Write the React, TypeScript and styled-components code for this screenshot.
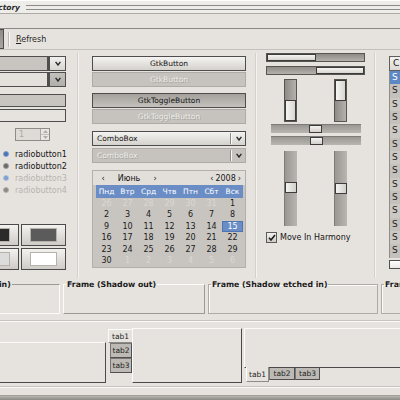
import styled, { createGlobalStyle } from "styled-components";

const FONT = `"DejaVu Sans", "Liberation Sans", sans-serif`;

const GlobalStyle = createGlobalStyle`
  * { box-sizing: border-box; }
  html, body { margin: 0; padding: 0; overflow: hidden; background: #e6e3df; }
  body { font-family: ${FONT}; color: #141414; }
`;

// window chrome
const Window = styled.div`
  width: 520px;
  height: 400px;
  margin-left: -100px;
  display: flex;
  flex-direction: column;
  background: #e6e3df;
`;

const TitleBar = styled.div`
  flex: none;
  height: 14px;
  display: flex;
  align-items: center;
  background: #efedea;
  border-top: 1px solid #ffffff;
  border-bottom: 1px solid #aeaba6;
`;

const TitleText = styled.div`
  width: 120px;
  text-align: right;
  font-size: 7.5px;
  font-weight: bold;
  font-style: italic;
  color: #2a2a2a;
  white-space: nowrap;
`;

const TitleRule = styled.div`
  flex: 1;
  height: 5px;
  margin-left: 6px;
  border-top: 1px solid #8d8b87;
  border-bottom: 1px solid #8d8b87;
`;

const MenuBar = styled.div`
  flex: none;
  height: 15px;
  border-bottom: 1px solid #8a8884;
`;

const ToolBar = styled.div`
  flex: none;
  height: 21px;
  display: flex;
  align-items: center;
  padding-left: 74px;
  border-bottom: 1px solid #c4c1bc;
`;

const ToolButton = styled.div`
  width: 30px;
  height: 20px;
  margin-top: -1px;
  border: 1px solid #4c4c4c;
  background: linear-gradient(#8f8c88, #a9a6a1);
`;

const ToolSeparator = styled.div`
  width: 2px;
  height: 15px;
  margin: 0 5px 0 4px;
  border-left: 1px solid #bdbab5;
  border-right: 1px solid #fbfbfa;
`;

const ToolLabel = styled.span`
  margin-left: 1px;
  font-size: 8px;
  color: #1e1e1e;
`;

// main grid of widgets
const Main = styled.div`
  flex: none;
  height: 230px;
  display: flex;
  padding-left: 10px;
`;

const Column = styled.div<{ $w: number; $pt: number }>`
  flex: none;
  width: ${(p) => p.$w}px;
  padding-top: ${(p) => p.$pt}px;
  display: flex;
  flex-direction: column;
`;

const ColumnRule = styled.div<{ $ml: number; $mr: number }>`
  flex: none;
  width: 2px;
  margin: 3px ${(p) => p.$mr}px 2px ${(p) => p.$ml}px;
  border-left: 1px solid #d3d0cb;
  border-right: 1px solid #f3f2f0;
`;

// column 1
const ComboEntry = styled.div<{ $mt?: number }>`
  display: flex;
  height: 15px;
  margin-top: ${(p) => p.$mt ?? 0}px;
`;

const EntryField = styled.div<{ $shade: "grey" | "light" }>`
  flex: 1;
  border: 1px solid #4f4f4f;
  background: ${(p) => (p.$shade === "grey" ? "#c8c5c0" : "#e4e1dc")};
`;

const ArrowButton = styled.div<{ $shade: "grey" | "light" }>`
  width: 18px;
  display: flex;
  align-items: center;
  justify-content: center;
  border: 1px solid #4f4f4f;
  border-left-width: 2px;
  background: ${(p) =>
    p.$shade === "grey"
      ? "linear-gradient(#c4c1bc, #b2afaa)"
      : "linear-gradient(#f1f0ed, #d9d6d1)"};
`;

const Entry = styled.div<{ $shade: "grey" | "light"; $mt: number }>`
  height: 13px;
  margin-top: ${(p) => p.$mt}px;
  border: 1px solid #4f4f4f;
  background: ${(p) => (p.$shade === "grey" ? "#c8c5c0" : "#e6e3df")};
`;

const Spin = styled.div`
  width: 35px;
  height: 13px;
  margin: 6px 0 0 105px;
  display: flex;
  border: 1px solid #8e8c88;
  background: #dedbd6;
`;

const SpinText = styled.span`
  flex: 1;
  padding-left: 3px;
  font-size: 8px;
  line-height: 11px;
  color: #aaa7a2;
`;

const SpinArrows = styled.div`
  width: 9px;
  display: flex;
  flex-direction: column;
  border-left: 1px solid #aaa7a2;
`;

const SpinHalf = styled.div`
  flex: 1;
  display: flex;
  align-items: center;
  justify-content: center;
  background: #e9e7e3;
  & + & { border-top: 1px solid #c2bfba; }
`;

const RadioList = styled.div`
  margin: 7px 0 0 92px;
  display: flex;
  flex-direction: column;
`;

const RadioRow = styled.div<{ $disabled?: boolean }>`
  height: 12.1px;
  display: flex;
  align-items: center;
  gap: 6px;
  font-size: 8px;
  color: ${(p) => (p.$disabled ? "#b6b3ae" : "#151515")};
`;

const RadioDot = styled.span<{ $on: boolean; $disabled?: boolean }>`
  width: 6px;
  height: 6px;
  margin-left: 1px;
  border-radius: 50%;
  flex: none;
  background: ${(p) =>
    p.$on
      ? p.$disabled
        ? "radial-gradient(circle, #7f9fd0 35%, #d5dce8 85%)"
        : "radial-gradient(circle, #4b74b6 35%, #b9c6dc 85%)"
      : p.$disabled
      ? "radial-gradient(circle, #8d8b87 35%, #d3d0cb 85%)"
      : "radial-gradient(circle, #6e6c68 35%, #c7c4bf 85%)"};
`;

const ColorGrid = styled.div`
  margin-top: 28px;
  display: grid;
  grid-template-columns: 45px 45px;
  grid-auto-rows: 22px;
  gap: 2px;
  justify-content: end;
`;

const ColorButton = styled.div`
  display: flex;
  padding: 3px 8px 3px 8px;
  border: 1px solid #4b4b4b;
  background: linear-gradient(#f3f2ef, #cfccc7);
`;

const Swatch = styled.div<{ $color: string }>`
  flex: 1;
  border: 1px solid #b5b2ad;
  background: ${(p) => p.$color};
`;

// column 2
type BtnState = "normal" | "insensitive" | "active";

const Button = styled.div<{ $state: BtnState; $mt: number }>`
  height: 15px;
  margin-top: ${(p) => p.$mt}px;
  display: flex;
  align-items: center;
  justify-content: center;
  font-size: 7.5px;
  border: 1px solid
    ${(p) => (p.$state === "insensitive" ? "#aeaba6" : "#4d4d4d")};
  background: ${(p) =>
    p.$state === "normal"
      ? "linear-gradient(#f4f3f1, #d5d2cd)"
      : p.$state === "active"
      ? "linear-gradient(#a4a19c, #c5c2bd)"
      : "#c6c3be"};
  color: ${(p) => (p.$state === "insensitive" ? "#ecebe8" : "#141414")};
  text-shadow: ${(p) =>
    p.$state === "insensitive" ? "1px 1px 0 #a9a6a1" : "none"};
`;

const ComboBox = styled(Button)`
  justify-content: flex-start;
  padding-left: 4px;
`;

const ComboText = styled.span`
  flex: 1;
`;

const ComboDivider = styled.span`
  width: 2px;
  height: 11px;
  border-left: 1px solid #8d8b87;
  border-right: 1px solid #fafaf9;
`;

const ComboArrow = styled.span`
  width: 13px;
  display: flex;
  justify-content: center;
`;

const Calendar = styled.div`
  height: 98px;
  margin-top: 7px;
  display: flex;
  flex-direction: column;
  border: 1px solid #b3b0ab;
  background: #c8c5c0;
`;

const CalHeader = styled.div`
  height: 14px;
  display: flex;
  align-items: center;
  padding: 0 4px 0 6px;
  background: #e2dfdb;
  font-size: 8px;
  color: #141414;
`;

const CalArrow = styled.span`
  width: 8px;
  text-align: center;
`;

const CalMonth = styled.span`
  width: 44px;
  text-align: center;
`;

const CalYear = styled.span`
  margin-left: auto;
  display: flex;
  align-items: center;
  gap: 2px;
`;

const DayNames = styled.div`
  height: 13px;
  margin: 0 2px 0 3px;
  display: grid;
  grid-template-columns: repeat(7, 21px);
  align-items: center;
  background: #6a8dc6;
  color: #ffffff;
  font-size: 7.5px;
  text-align: center;
`;

const DayGrid = styled.div`
  margin: 0 2px 0 3px;
  display: grid;
  grid-template-columns: repeat(7, 21px);
  grid-auto-rows: 11.4px;
  font-size: 8px;
  text-align: center;
`;

const Day = styled.span<{ $other?: boolean; $selected?: boolean }>`
  line-height: ${(p) => (p.$selected ? "9.4px" : "11.4px")};
  color: ${(p) => (p.$selected ? "#ffffff" : p.$other ? "#dad7d2" : "#1a1a1a")};
  background: ${(p) => (p.$selected ? "#6a8dc6" : "transparent")};
  border: ${(p) => (p.$selected ? "1px solid #4f74b3" : "none")};
`;

// column 3
const Trough = styled.div<{ $mt: number; $reverse?: boolean }>`
  height: 9px;
  margin-top: ${(p) => p.$mt}px;
  display: flex;
  flex-direction: ${(p) => (p.$reverse ? "row-reverse" : "row")};
  border: 1px solid #57554f;
  background: linear-gradient(#8e8b86, #b5b2ad);
`;

const BarFill = styled.div`
  height: 100%;
  border: 1px solid #3b3b3b;
  background: linear-gradient(#f6f5f3, #d8d5d0);
`;

const VPair = styled.div<{ $mt: number; $h: number }>`
  height: ${(p) => p.$h}px;
  margin-top: ${(p) => p.$mt}px;
  padding-left: 18px;
  display: flex;
  gap: 37px;
`;

const VTrough = styled.div<{ $fromTop?: boolean }>`
  width: 13px;
  height: 100%;
  display: flex;
  flex-direction: ${(p) => (p.$fromTop ? "column" : "column-reverse")};
  border: 1px solid #57554f;
  background: linear-gradient(90deg, #8e8b86, #b5b2ad);
`;

const VFill = styled.div`
  width: 100%;
  border: 1px solid #3b3b3b;
  background: linear-gradient(90deg, #f6f5f3, #d8d5d0);
`;

const HScale = styled.div<{ $mt: number }>`
  width: 90px;
  height: 9px;
  margin: ${(p) => p.$mt}px 0 0 5px;
  display: flex;
  border-top: 1px solid #7d7b77;
  background: linear-gradient(#9a9792, #b9b6b1);
`;

const HThumb = styled.div`
  width: 13px;
  height: 100%;
  border: 1px solid #3c3c3c;
  background: linear-gradient(#f4f3f1, #d3d0cb);
`;

const VScale = styled.div`
  width: 13px;
  height: 100%;
  display: flex;
  flex-direction: column;
  border-left: 1px solid #7d7b77;
  background: linear-gradient(90deg, #9a9792, #b9b6b1);
`;

const VThumb = styled.div`
  width: 100%;
  height: 11px;
  border: 1px solid #3c3c3c;
  background: linear-gradient(90deg, #f4f3f1, #d3d0cb);
`;

const CheckRow = styled.div`
  height: 11px;
  margin-top: 6px;
  display: flex;
  align-items: center;
  gap: 3px;
  font-size: 8px;
  color: #151515;
`;

const CheckBox = styled.span`
  width: 11px;
  height: 11px;
  display: flex;
  align-items: center;
  justify-content: center;
  border: 1px solid #5b5b5b;
  background: linear-gradient(#f2f1ee, #cfccc7);
`;

// column 4
const Tree = styled.div`
  height: 213px;
  display: flex;
  flex-direction: column;
`;

const TreeHeader = styled.div`
  height: 15px;
  padding-left: 3px;
  border: 1px solid #5f5f5f;
  border-right: 0;
  background: linear-gradient(#f3f2f0, #dcd9d4);
  font-size: 9px;
  line-height: 13px;
  white-space: nowrap;
  overflow: hidden;
`;

const TreeRow = styled.div<{ $selected?: boolean; $alt?: boolean }>`
  height: 13.33px;
  padding-left: 2px;
  border-left: 1px solid #8e8c88;
  font-size: 9px;
  line-height: 13.33px;
  white-space: nowrap;
  overflow: hidden;
  color: ${(p) => (p.$selected ? "#ffffff" : "#222222")};
  background: ${(p) =>
    p.$selected ? "#5d88c6" : p.$alt ? "#c4c1bc" : "#ccc9c4"};
`;

const TreeScroll = styled.div`
  height: 9px;
  margin-top: auto;
  border: 1px solid #4f4f4f;
  border-right: 0;
  background: linear-gradient(#ffffff, #e9e8e5);
`;

// frames
const FramesRow = styled.div`
  flex: none;
  height: 34px;
  display: flex;
  gap: 3px;
  padding-left: 24px;
`;

const frameBorders = {
  in: "#9c9994 #fcfcfb #fcfcfb #9c9994",
  out: "#fcfcfb #9c9994 #9c9994 #fcfcfb",
  etched: "#aeaba6",
};

const Frame = styled.fieldset<{ $w: number; $shadow: "in" | "out" | "etched" }>`
  flex: none;
  width: ${(p) => p.$w}px;
  height: 34px;
  margin: 0;
  padding: 0 2px;
  min-width: 0;
  border: 1px solid;
  border-color: ${(p) => frameBorders[p.$shadow]};
  box-shadow: ${(p) => (p.$shadow === "etched" ? "inset 1px 1px 0 #fbfbfa" : "none")};
`;

const FrameLabel = styled.legend`
  padding: 0 1px;
  font-size: 7.8px;
  font-weight: bold;
  line-height: 9px;
  color: #1a1a1a;
  white-space: nowrap;
`;

const HRule = styled.div<{ $mt: number }>`
  flex: none;
  height: 2px;
  margin-top: ${(p) => p.$mt}px;
  border-top: 1px solid #c6c3be;
  border-bottom: 1px solid #fafaf9;
`;

// notebooks
const NotebookRow = styled.div`
  flex: none;
  height: 55px;
  margin-top: 6px;
  padding-left: 10px;
  display: flex;
`;

const TopNotebook = styled.div`
  width: 196px;
  display: flex;
  flex-direction: column;
`;

const TopTabs = styled.div`
  height: 14px;
  display: flex;
  align-items: flex-end;
  padding-left: 2px;
`;

const LeftNotebook = styled.div`
  width: 134px;
  margin-left: 2px;
  display: flex;
`;

const LeftTabs = styled.div`
  width: 24px;
  display: flex;
  flex-direction: column;
  padding-top: 1px;
`;

const BottomNotebook = styled.div`
  flex: 1;
  margin-left: 2px;
  display: flex;
  flex-direction: column;
`;

const BottomTabs = styled.div`
  height: 15px;
  display: flex;
  align-items: flex-start;
  padding-left: 2px;
`;

const Page = styled.div<{ $h?: number }>`
  flex: ${(p) => (p.$h ? "none" : "1")};
  height: ${(p) => (p.$h ? `${p.$h}px` : "auto")};
  border: 1px solid;
  border-color: #fbfbfa #4a4a4a #4a4a4a #fbfbfa;
`;

const Tab = styled.div<{ $active?: boolean; $w: number; $h: number }>`
  flex: none;
  width: ${(p) => p.$w}px;
  height: ${(p) => p.$h}px;
  display: flex;
  align-items: center;
  justify-content: center;
  font-size: 7.5px;
  color: #1e1e1e;
  border: 1px solid;
  border-color: ${(p) =>
    p.$active ? "#fbfbfa #8e8c88 #8e8c88 #fbfbfa" : "#7a7874 #4f4f4f #4f4f4f #7a7874"};
  background: ${(p) => (p.$active ? "#e6e3df" : "#bdbab5")};
`;

const SideTab = styled(Tab)`
  margin-left: ${(p) => (p.$active ? 0 : 2)}px;
  border-right: ${(p) => (p.$active ? "0" : "1px solid #4f4f4f")};
`;

const BottomTab = styled(Tab)`
  margin-top: ${(p) => (p.$active ? -1 : 0)}px;
  border-top: 0;
`;

const Footer = styled.div`
  flex: none;
  height: 5px;
  margin-top: auto;
  border-top: 1px solid #a3a09b;
  background: linear-gradient(#b8b5b0, #8b8985);
`;

const Chevron = () => (
  <svg width="6" height="5" viewBox="0 0 6 5">
    <polyline points="0.6,0.8 3,4 5.4,0.8" fill="none" stroke="#2a2a2a" strokeWidth="1.4" />
  </svg>
);

const SpinTriangle = ({ up }: { up?: boolean }) => (
  <svg width="5" height="3" viewBox="0 0 5 3">
    <polygon points={up ? "0,3 2.5,0 5,3" : "0,0 2.5,3 5,0"} fill="#b1aea9" />
  </svg>
);

const CheckMark = () => (
  <svg width="8" height="7" viewBox="0 0 8 7">
    <polyline points="1,3.8 3,6 7,1" fill="none" stroke="#1e1e1e" strokeWidth="1.6" />
  </svg>
);

const dayNames = ["Пнд", "Втр", "Срд", "Чтв", "Птн", "Сбт", "Вск"];

const days: { n: number; other?: boolean }[] = [
  ...[26, 27, 28, 29, 30, 31].map((n) => ({ n, other: true })),
  ...Array.from({ length: 30 }, (_, i) => ({ n: i + 1 })),
  ...[1, 2, 3, 4, 5, 6].map((n) => ({ n, other: true })),
];

const radios = [
  { label: "radiobutton1", on: true },
  { label: "radiobutton2", on: false },
  { label: "radiobutton3", on: true, disabled: true },
  { label: "radiobutton4", on: false, disabled: true },
];

export default function App() {
  return (
    <>
      <GlobalStyle />
      <Window>
        <TitleBar>
          <TitleText>The Widget Factory</TitleText>
          <TitleRule />
        </TitleBar>
        <MenuBar />
        <ToolBar>
          <ToolButton />
          <ToolSeparator />
          <ToolLabel>
            <u>R</u>efresh
          </ToolLabel>
        </ToolBar>

        <Main>
          <Column $w={156} $pt={6}>
            <ComboEntry>
              <EntryField $shade="grey" />
              <ArrowButton $shade="light">
                <Chevron />
              </ArrowButton>
            </ComboEntry>
            <ComboEntry $mt={1}>
              <EntryField $shade="light" />
              <ArrowButton $shade="grey">
                <Chevron />
              </ArrowButton>
            </ComboEntry>
            <Entry $shade="grey" $mt={7} />
            <Entry $shade="light" $mt={2} />
            <Spin>
              <SpinText>1</SpinText>
              <SpinArrows>
                <SpinHalf>
                  <SpinTriangle up />
                </SpinHalf>
                <SpinHalf>
                  <SpinTriangle />
                </SpinHalf>
              </SpinArrows>
            </Spin>
            <RadioList>
              {radios.map((r) => (
                <RadioRow key={r.label} $disabled={r.disabled}>
                  <RadioDot $on={r.on} $disabled={r.disabled} />
                  {r.label}
                </RadioRow>
              ))}
            </RadioList>
            <ColorGrid>
              <ColorButton>
                <Swatch $color="#2b2b2b" />
              </ColorButton>
              <ColorButton>
                <Swatch $color="#5b5b5b" />
              </ColorButton>
              <ColorButton>
                <Swatch $color="#dcdcdc" />
              </ColorButton>
              <ColorButton>
                <Swatch $color="#ffffff" />
              </ColorButton>
            </ColorGrid>
          </Column>

          <ColumnRule $ml={11} $mr={13} />

          <Column $w={154} $pt={6}>
            <Button $state="normal" $mt={0}>GtkButton</Button>
            <Button $state="insensitive" $mt={1}>GtkButton</Button>
            <Button $state="active" $mt={6}>GtkToggleButton</Button>
            <Button $state="insensitive" $mt={1}>GtkToggleButton</Button>
            <ComboBox $state="normal" $mt={7}>
              <ComboText>ComboBox</ComboText>
              <ComboDivider />
              <ComboArrow>
                <Chevron />
              </ComboArrow>
            </ComboBox>
            <ComboBox $state="insensitive" $mt={2}>
              <ComboText>ComboBox</ComboText>
              <ComboDivider />
              <ComboArrow>
                <Chevron />
              </ComboArrow>
            </ComboBox>
            <Calendar>
              <CalHeader>
                <CalArrow>‹</CalArrow>
                <CalMonth>Июнь</CalMonth>
                <CalArrow>›</CalArrow>
                <CalYear>
                  <span>‹</span>
                  <span>2008</span>
                  <span>›</span>
                </CalYear>
              </CalHeader>
              <DayNames>
                {dayNames.map((d) => (
                  <span key={d}>{d}</span>
                ))}
              </DayNames>
              <DayGrid>
                {days.map((d, i) => (
                  <Day key={i} $other={d.other} $selected={!d.other && d.n === 15}>
                    {d.n}
                  </Day>
                ))}
              </DayGrid>
            </Calendar>
          </Column>

          <ColumnRule $ml={9} $mr={9} />

          <Column $w={99} $pt={3}>
            <Trough $mt={0}>
              <BarFill style={{ width: "51%" }} />
            </Trough>
            <Trough $mt={4} $reverse>
              <BarFill style={{ width: "50%" }} />
            </Trough>
            <VPair $mt={4} $h={43}>
              <VTrough>
                <VFill style={{ height: "52%" }} />
              </VTrough>
              <VTrough $fromTop>
                <VFill style={{ height: "50%" }} />
              </VTrough>
            </VPair>
            <HScale $mt={2}>
              <HThumb style={{ marginLeft: 38 }} />
            </HScale>
            <HScale $mt={3}>
              <HThumb style={{ marginLeft: 39 }} />
            </HScale>
            <VPair $mt={6} $h={75}>
              <VScale>
                <VThumb style={{ marginTop: 31 }} />
              </VScale>
              <VScale>
                <VThumb style={{ marginTop: 32 }} />
              </VScale>
            </VPair>
            <CheckRow>
              <CheckBox>
                <CheckMark />
              </CheckBox>
              Move In Harmony
            </CheckRow>
          </Column>

          <ColumnRule $ml={9} $mr={13} />

          <Column $w={110} $pt={6}>
            <Tree>
              <TreeHeader>C</TreeHeader>
              {Array.from({ length: 14 }, (_, i) => (
                <TreeRow key={i} $selected={i === 0} $alt={i % 2 === 1}>
                  S
                </TreeRow>
              ))}
              <TreeScroll />
            </Tree>
          </Column>
        </Main>

        <FramesRow>
          <Frame $w={136} $shadow="in">
            <FrameLabel>Frame (Shadow in)</FrameLabel>
          </Frame>
          <Frame $w={142} $shadow="out">
            <FrameLabel>Frame (Shadow out)</FrameLabel>
          </Frame>
          <Frame $w={170} $shadow="etched">
            <FrameLabel>Frame (Shadow etched in)</FrameLabel>
          </Frame>
          <Frame $w={120} $shadow="etched">
            <FrameLabel>Frame (Shadow etched out)</FrameLabel>
          </Frame>
        </FramesRow>

        <HRule $mt={6} />

        <NotebookRow>
          <TopNotebook>
            <TopTabs>
              <Tab $active $w={23} $h={14}>tab1</Tab>
              <Tab $w={26} $h={12}>tab2</Tab>
              <Tab $w={26} $h={12}>tab3</Tab>
            </TopTabs>
            <Page />
          </TopNotebook>
          <LeftNotebook>
            <LeftTabs>
              <SideTab $active $w={24} $h={14}>tab1</SideTab>
              <SideTab $w={22} $h={15}>tab2</SideTab>
              <SideTab $w={22} $h={15}>tab3</SideTab>
            </LeftTabs>
            <Page />
          </LeftNotebook>
          <BottomNotebook>
            <Page $h={40} />
            <BottomTabs>
              <BottomTab $active $w={23} $h={15}>tab1</BottomTab>
              <BottomTab $w={26} $h={12}>tab2</BottomTab>
              <BottomTab $w={25} $h={12}>tab3</BottomTab>
            </BottomTabs>
          </BottomNotebook>
        </NotebookRow>

        <HRule $mt={3} />
        <Footer />
      </Window>
    </>
  );
}
